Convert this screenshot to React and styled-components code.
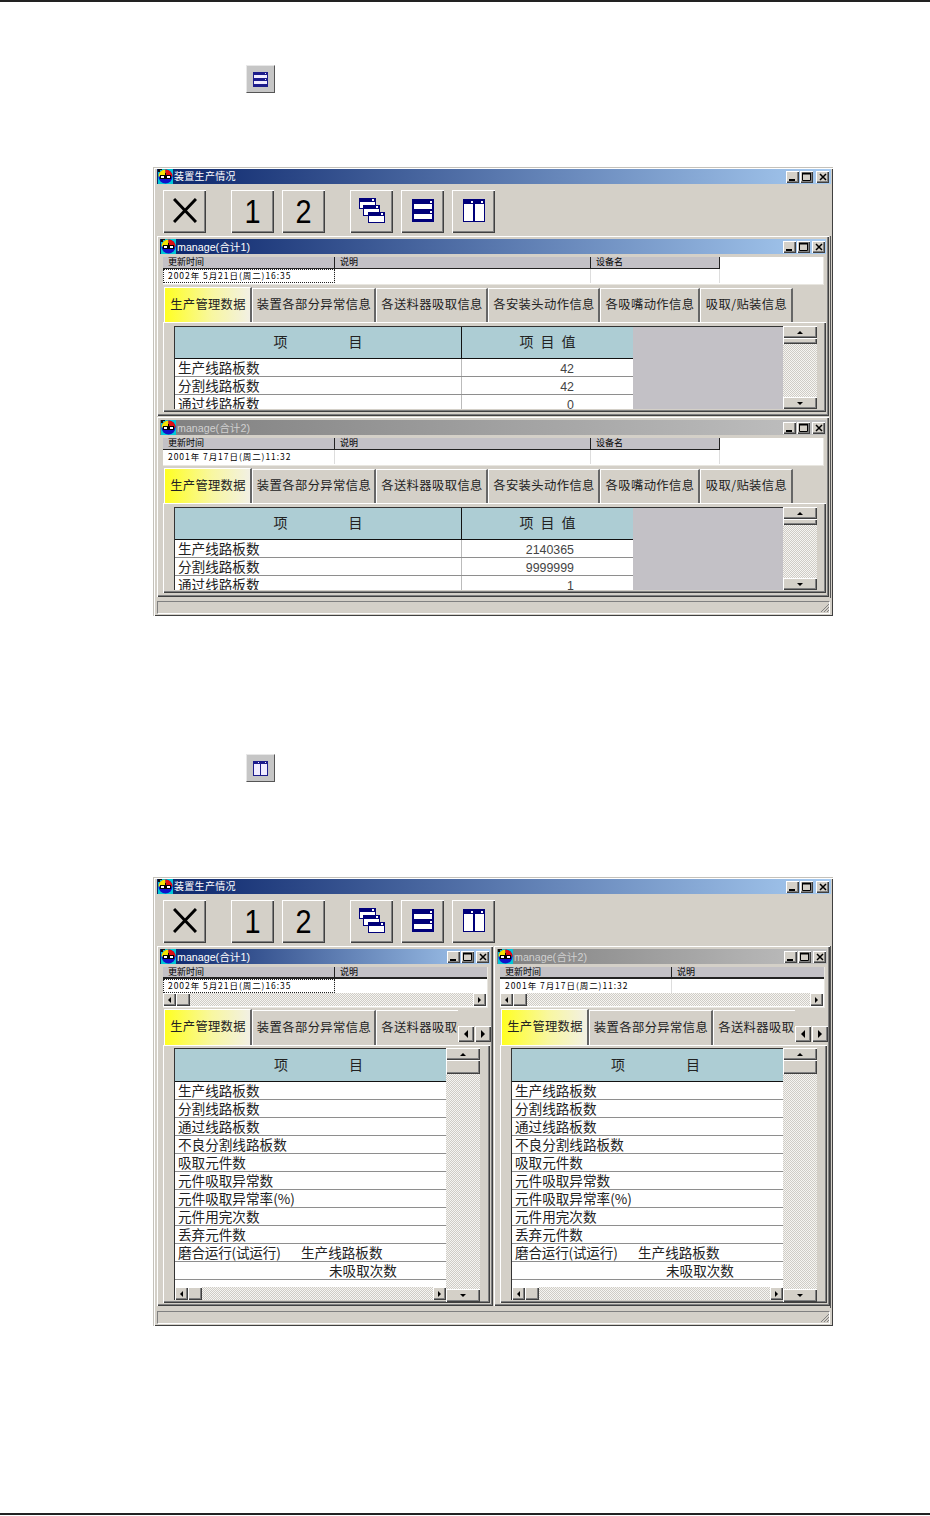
import React from "react";
import styled, { createGlobalStyle, css } from "styled-components";

const Global = createGlobalStyle`
  html, body { margin: 0; padding: 0; background: #fff; }
  body { font-family: "Noto Sans CJK SC", "Liberation Sans", sans-serif; color: #111; }
`;

const raised = css`
  background-color: #d4d0c8;
  box-shadow: inset 1px 1px #fff, inset -1px -1px #404040, inset -2px -2px #808080;
`;
const dither = css`
  background: repeating-conic-gradient(#cfccc6 0 25%, #f6f5f2 0 50%) 0 0 / 2px 2px;
`;

const Page = styled.div`
  width: 930px;
  height: 1516px;
  display: flex;
  flex-direction: column;
  overflow: hidden;
`;
const Rule = styled.div`
  height: 2px;
  background: #222;
  flex: none;
  margin-top: ${(p) => (p.$bottom ? "auto" : "0")};
  margin-bottom: ${(p) => (p.$bottom ? "1px" : "0")};
`;
const TipButton = styled.div`
  flex: none;
  width: 29px;
  height: 28px;
  margin: ${(p) => p.$top}px 0 0 246px;
  background: #c6c6c6;
  border: 1px solid;
  border-color: #e8e8e8 #555 #555 #e8e8e8;
  box-sizing: border-box;
  display: flex;
  align-items: center;
  justify-content: center;
`;
const Win = styled.div`
  flex: none;
  box-sizing: border-box;
  width: 680px;
  height: 449px;
  margin: ${(p) => p.$top}px 0 0 153px;
  padding: 2px 2px 3px 4px;
  background: #d4d0c8;
  box-shadow: inset 1px 1px #c4c1ba, inset 2px 2px #fff, inset -1px -1px #404040;
`;
const TitleBar = styled.div`
  height: 15px;
  display: flex;
  align-items: center;
  gap: 1px;
  padding-left: 1px;
  color: ${(p) => (p.$inactive ? "#d0d0d0" : "#fff")};
  background: ${(p) =>
    p.$inactive
      ? "linear-gradient(90deg, #808080, #c0c0c0)"
      : "linear-gradient(90deg, #0a246a, #a6caf0)"};
`;
const TitleText = styled.span`
  flex: 1;
  padding-top: 1px;
  font-family: "Liberation Sans", "Noto Sans CJK SC", sans-serif;
  font-size: ${(p) => (p.$child ? "10.7px" : "10px")};
  letter-spacing: ${(p) => (p.$child ? "0" : "0.3px")};
  line-height: 14px;
  white-space: nowrap;
`;
const WinControls = styled.div`
  display: flex;
  flex: none;
  padding-right: ${(p) => (p.$child ? "1px" : "2px")};
`;
const WinButton = styled.div`
  ${raised}
  width: 13px;
  height: 12px;
  margin-left: ${(p) => p.$gap}px;
  display: flex;
  align-items: center;
  justify-content: center;
`;
const Toolbar = styled.div`
  height: 52px;
  box-sizing: border-box;
  padding: 6px 0 3px 6px;
  display: flex;
  gap: 25px;
`;
const ToolGroup = styled.div`
  display: flex;
  gap: 8px;
`;
const ToolButton = styled.div`
  ${raised}
  box-sizing: border-box;
  width: 43px;
  height: 43px;
  padding-bottom: 2px;
  display: flex;
  align-items: center;
  justify-content: center;
`;
const Digit = styled.span`
  display: block;
  font-family: "Liberation Sans", sans-serif;
  font-size: 34px;
  line-height: 1;
  color: #000;
  transform: scaleX(0.85);
`;
const Mdi = styled.div`
  height: 362px;
  display: flex;
  flex-direction: ${(p) => (p.$side ? "row" : "column")};
  gap: 1px;
  border-right: 1px solid #555;
  box-sizing: border-box;
  width: 674px;
`;
const Child = styled.div`
  ${raised}
  box-sizing: border-box;
  flex: none;
  width: ${(p) => (p.$side ? "336px" : "672px")};
  height: ${(p) => (p.$side ? "360px" : "180px")};
  padding: 3px;
`;
const Info = styled.div`
  box-sizing: border-box;
  height: ${(p) => (p.$side ? "41px" : "28px")};
  margin: 3px 2px ${(p) => (p.$side ? "1px" : "2px")} 3px;
  background: #fff;
  border: 1px solid #e8e6e0;
  border-top: 0;
  border-left: 0;
  display: flex;
  flex-direction: column;
`;
const InfoRow = styled.div`
  display: flex;
  flex: none;
  height: ${(p) => p.$h}px;
`;
const InfoHead = styled.div`
  box-sizing: border-box;
  width: ${(p) => p.$w}px;
  flex: none;
  height: 12px;
  background: #c3c1c6;
  border-right: 1px solid #222;
  border-bottom: ${(p) => (p.$thick ? 2 : 1)}px solid #222;
  font-size: 9px;
  line-height: 10px;
  padding-left: 5px;
  color: #000;
  white-space: nowrap;
  &:last-child { ${(p) => p.$open && "border-right: 0; flex: 1;"} }
`;
const InfoCell = styled.div`
  box-sizing: border-box;
  width: ${(p) => p.$w}px;
  flex: none;
  height: 14px;
  padding-left: 5px;
  font-size: 8.5px;
  line-height: 13px;
  letter-spacing: 0.95px;
  color: #000;
  white-space: nowrap;
  border-right: 1px solid #ddd;
  outline: ${(p) => (p.$focus ? "1px dotted #222" : "none")};
  outline-offset: -1px;
  &:last-child { ${(p) => p.$open && "border-right: 0; flex: 1;"} }
`;
const HScroll = styled.div`
  ${dither}
  flex: none;
  height: 13px;
  width: ${(p) => p.$w}px;
  display: flex;
`;
const ScrollBtn = styled.div`
  ${raised}
  flex: none;
  width: ${(p) => p.$w || 13}px;
  height: ${(p) => p.$h || 13}px;
  margin-right: ${(p) => (p.$auto ? "auto" : "0")};
  display: flex;
  align-items: center;
  justify-content: center;
`;
const Arrow = styled.i`
  display: block;
  width: 0;
  height: 0;
  border-style: solid;
  border-color: transparent;
  ${(p) => {
    const s = p.$size || 3;
    if (p.$dir === "up") return `border-width: 0 ${s}px ${s}px; border-bottom-color: #000;`;
    if (p.$dir === "down") return `border-width: ${s}px ${s}px 0; border-top-color: #000;`;
    if (p.$dir === "left") return `border-width: ${s}px ${s}px ${s}px 0; border-right-color: #000;`;
    return `border-width: ${s}px 0 ${s}px ${s}px; border-left-color: #000;`;
  }}
`;
const TabRow = styled.div`
  display: flex;
  height: ${(p) => (p.$side ? "36px" : "35px")};
  margin-left: 4px;
`;
const TabStrip = styled.div`
  display: flex;
  width: ${(p) => (p.$clip ? "294px" : "auto")};
  overflow: hidden;
  flex: none;
`;
const Tab = styled.div`
  box-sizing: border-box;
  flex: none;
  width: ${(p) => p.$w}px;
  margin-top: ${(p) => (p.$active ? "0" : "1px")};
  border-top: 1px solid #fff;
  border-left: 1px solid #fff;
  border-right: 2px solid #666;
  background: ${(p) => (p.$active ? "linear-gradient(90deg, #ffff22 0%, #f8f7a0 55%, #f2f0e4 100%)" : "#d4d0c8")};
  display: flex;
  align-items: center;
  justify-content: center;
  padding: 0 0 3px 1px;
  overflow: hidden;
  font-size: 12.3px;
  letter-spacing: ${(p) => p.$ls || 0.4}px;
  color: #222;
  white-space: nowrap;
`;
const TabScroll = styled.div`
  display: flex;
  flex: none;
  gap: 1px;
  align-self: flex-end;
  margin-bottom: 3px;
`;
const Panel = styled.div`
  ${raised}
  box-sizing: border-box;
  margin-left: 3px;
  height: ${(p) => (p.$side ? "258px" : "90px")};
  width: ${(p) => (p.$side ? "327px" : "663px")};
  padding: ${(p) => (p.$side ? "3px" : "4px")} 0 0 11px;
  display: flex;
`;
const DataGrid = styled.div`
  flex: none;
  box-sizing: border-box;
  width: ${(p) => (p.$side ? "272px" : "609px")};
  height: ${(p) => (p.$side ? "252px" : "83px")};
  background: #fff;
  display: flex;
  flex-direction: column;
  border-left: 1px solid #333;
  border-top: 1px solid #333;
  overflow: hidden;
`;
const GridBody = styled.div`
  flex: 1;
  min-height: 0;
  display: flex;
  overflow: hidden;
`;
const Columns = styled.div`
  flex: none;
  width: ${(p) => (p.$side ? "271px" : "458px")};
  overflow: hidden;
`;
const Filler = styled.div`
  flex: 1;
  background: #c3c1c6;
`;
const HeaderRow = styled.div`
  display: flex;
  height: ${(p) => (p.$side ? "32px" : "31px")};
  width: 458px;
  background: #adcdd4;
  border-bottom: 1px solid #111;
`;
const HeadCell = styled.div`
  flex: none;
  box-sizing: border-box;
  width: ${(p) => p.$w}px;
  padding-bottom: 3px;
  display: flex;
  justify-content: center;
  align-items: center;
  gap: ${(p) => p.$gap}px;
  font-size: 14px;
  color: #222;
  border-right: ${(p) => (p.$line ? "1px solid #111" : "0")};
`;
const Row = styled.div`
  display: flex;
  width: 458px;
  height: 18px;
  box-sizing: border-box;
  border-bottom: 1px solid #8e8e8e;
`;
const Label = styled.div`
  flex: none;
  box-sizing: border-box;
  width: 287px;
  padding-left: ${(p) => p.$indent || 3}px;
  font-size: 13.6px;
  line-height: 17px;
  color: #222;
  white-space: nowrap;
  border-right: 1px solid #bbb;
`;
const Lead = styled.span`
  display: inline-block;
  width: 123px;
  letter-spacing: -0.2px;
`;
const Value = styled.div`
  flex: 1;
  text-align: right;
  padding-right: 59px;
  font-family: "Liberation Sans", sans-serif;
  font-size: 12.4px;
  line-height: 21px;
  color: #444;
`;
const VScroll = styled.div`
  ${dither}
  flex: none;
  width: 34px;
  height: ${(p) => (p.$side ? "254px" : "83px")};
  display: flex;
  flex-direction: column;
`;
const Spacer = styled.div`
  flex: 1;
`;
const StatusBar = styled.div`
  position: relative;
  box-sizing: border-box;
  height: 13px;
  width: 673px;
  margin-top: 3px;
  border: 1px solid;
  border-color: #808080 #fff #fff #808080;
`;
const Grip = styled.svg`
  position: absolute;
  right: -1px;
  bottom: 0;
`;

const Logo = () => (
  <svg width="15" height="15" viewBox="0 0 15 15" style={{ flex: "none" }}>
    <rect width="15" height="15" fill="#00c8d8" />
    <path d="M0 0h4v1H2v2H0z" fill="#111" />
    <circle cx="7.5" cy="7.5" r="7" fill="#1010c8" />
    <path d="M7.5 7.5V.5a7 7 0 0 0-7 7z" fill="#f4e400" />
    <path d="M7.5 7.5V.5a7 7 0 0 1 7 7z" fill="#e01010" />
    <rect x="2" y="6" width="11" height="4" fill="#000" />
    <rect x="3" y="7" width="3" height="2" fill="#fff" />
    <rect x="9" y="7" width="3" height="2" fill="#fff" />
    <rect x="7" y="4" width="1" height="2" fill="#000" />
  </svg>
);
const CloseGlyph = () => (
  <svg width="8" height="8" viewBox="0 0 8 8"><path d="M1 1l6 6M7 1L1 7" stroke="#000" strokeWidth="1.5" /></svg>
);
const MaxGlyph = () => (
  <svg width="9" height="9" viewBox="0 0 9 9"><path d="M.5 1.5h8v7h-8z" fill="none" stroke="#000" /><path d="M0 1.5h9" stroke="#000" strokeWidth="2" /></svg>
);
const MinGlyph = () => (
  <svg width="9" height="9" viewBox="0 0 9 9"><rect x="1" y="7" width="6" height="2" fill="#000" /></svg>
);
const BigX = () => (
  <svg width="24" height="25" viewBox="0 0 24 25"><path d="M1 1l22 23M23 1L1 24" stroke="#000" strokeWidth="3" /></svg>
);
const Cascade = () => (
  <svg width="26" height="25" viewBox="0 0 26 25" shapeRendering="crispEdges">
    {[[0, 0], [4, 7], [9, 14]].map(([x, y]) => (
      <g key={x}>
        <rect x={x} y={y} width="17" height="11" fill="#00007a" />
        <rect x={x + 1} y={y + 4} width="15" height="6" fill="#fff" />
        <rect x={x + 13} y={y + 1} width="2" height="2" fill="#fff" />
      </g>
    ))}
  </svg>
);
const HTile = () => (
  <svg width="22" height="23" viewBox="0 0 22 23" shapeRendering="crispEdges">
    <rect width="22" height="23" fill="#00007a" />
    <rect x="2" y="5" width="18" height="5" fill="#fff" />
    <rect x="2" y="15" width="18" height="5" fill="#fff" />
    <rect x="18" y="2" width="2" height="2" fill="#fff" />
    <rect x="18" y="12" width="2" height="2" fill="#fff" />
  </svg>
);
const VTile = () => (
  <svg width="22" height="23" viewBox="0 0 22 23" shapeRendering="crispEdges">
    <rect width="22" height="23" fill="#00007a" />
    <rect x="1" y="5" width="9" height="17" fill="#fff" />
    <rect x="12" y="5" width="9" height="17" fill="#fff" />
    <rect x="8" y="2" width="2" height="2" fill="#fff" />
    <rect x="18" y="2" width="2" height="2" fill="#fff" />
  </svg>
);
const SmallH = () => (
  <svg width="15" height="15" viewBox="0 0 15 15" shapeRendering="crispEdges">
    <rect width="15" height="15" fill="#1c1c8c" />
    <rect x="1" y="3" width="13" height="3" fill="#f0ecff" />
    <rect x="1" y="9" width="13" height="3" fill="#f0ecff" />
    <rect x="12" y="1" width="1" height="1" fill="#f0ecff" />
    <rect x="12" y="7" width="1" height="1" fill="#f0ecff" />
  </svg>
);
const SmallV = () => (
  <svg width="15" height="15" viewBox="0 0 15 15" shapeRendering="crispEdges">
    <rect width="15" height="15" fill="#1c1c8c" />
    <rect x="1" y="3" width="6" height="11" fill="#f0ecff" />
    <rect x="8" y="3" width="6" height="11" fill="#f0ecff" />
    <rect x="5" y="1" width="1" height="1" fill="#f0ecff" />
    <rect x="12" y="1" width="1" height="1" fill="#f0ecff" />
  </svg>
);

const TABS = [
  ["生产管理数据", 88],
  ["装置各部分异常信息", 124],
  ["各送料器吸取信息", 112],
  ["各安装头动作信息", 112],
  ["各吸嘴动作信息", 100],
  ["吸取/贴装信息", 93],
];
const ROWS = ["分割线路板数", "通过线路板数", "不良分割线路板数", "吸取元件数", "元件吸取异常数", "元件吸取异常率(%)", "元件用完次数", "丢弃元件数"];

const Controls = ({ child }) => (
  <WinControls $child={child}>
    <WinButton $gap={0}><MinGlyph /></WinButton>
    <WinButton $gap={1}><MaxGlyph /></WinButton>
    <WinButton $gap={child ? 2 : 3}><CloseGlyph /></WinButton>
  </WinControls>
);

const VBar = ({ side }) => (
  <VScroll $side={side}>
    <ScrollBtn $w={34} $h={12}><Arrow $dir="up" /></ScrollBtn>
    <ScrollBtn $w={34} $h={side ? 14 : 6} />
    <Spacer />
    <ScrollBtn $w={34} $h={side ? 13 : 12}><Arrow $dir="down" /></ScrollBtn>
  </VScroll>
);

const ManageWindow = ({ title, date, active, side, values }) => (
  <Child $side={side}>
    <TitleBar $child $inactive={!active}>
      <Logo />
      <TitleText $child>{title}</TitleText>
      <Controls child />
    </TitleBar>
    <Info $side={side}>
      <InfoRow $h={12}>
        <InfoHead $w={172} $thick={side}>更新时间</InfoHead>
        {side ? (
          <InfoHead $open $thick $w={100}>说明</InfoHead>
        ) : (
          <>
            <InfoHead $w={256}>说明</InfoHead>
            <InfoHead $w={129}>设备名</InfoHead>
          </>
        )}
      </InfoRow>
      <InfoRow $h={14}>
        <InfoCell $w={172} $focus={active}>{date}</InfoCell>
        {side ? (
          <InfoCell $open $w={100} />
        ) : (
          <>
            <InfoCell $w={256} />
            <InfoCell $w={129} />
          </>
        )}
      </InfoRow>
      {side && (
        <HScroll $w={323}>
          <ScrollBtn><Arrow $dir="left" /></ScrollBtn>
          <ScrollBtn $auto $w={14} />
          <ScrollBtn><Arrow $dir="right" /></ScrollBtn>
        </HScroll>
      )}
    </Info>
    <TabRow $side={side}>
      <TabStrip $clip={side}>
        {(side ? TABS.slice(0, 3) : TABS).map(([t, w], i) => (
          <Tab key={t} $w={w} $active={i === 0} $ls={i === 0 ? 0.3 : 0.4}>{t}</Tab>
        ))}
      </TabStrip>
      {side && (
        <TabScroll>
          <ScrollBtn $w={16} $h={16}><Arrow $dir="left" $size={4} /></ScrollBtn>
          <ScrollBtn $w={16} $h={16}><Arrow $dir="right" $size={4} /></ScrollBtn>
        </TabScroll>
      )}
    </TabRow>
    <Panel $side={side}>
      <DataGrid $side={side}>
        <GridBody>
          <Columns $side={side}>
            <HeaderRow $side={side}>
              <HeadCell $w={287} $gap={61} $line={!side}><span>项</span><span>目</span></HeadCell>
              {!side && <HeadCell $w={171} $gap={7}><span>项</span><span>目</span><span>值</span></HeadCell>}
            </HeaderRow>
            <Row>
              <Label>生产线路板数</Label>
              {values && <Value>{values[0]}</Value>}
            </Row>
            {(side ? ROWS : ROWS.slice(0, 2)).map((r, i) => (
              <Row key={r}>
                <Label>{r}</Label>
                {values && <Value>{values[i + 1]}</Value>}
              </Row>
            ))}
            {side && (
              <>
                <Row><Label><Lead>磨合运行(试运行)</Lead>生产线路板数</Label></Row>
                <Row><Label $indent={154}>未吸取次数</Label></Row>
              </>
            )}
          </Columns>
          {!side && <Filler />}
        </GridBody>
        {side && (
          <HScroll $w={271}>
            <ScrollBtn><Arrow $dir="left" /></ScrollBtn>
            <ScrollBtn $auto $w={14} />
            <ScrollBtn><Arrow $dir="right" /></ScrollBtn>
          </HScroll>
        )}
      </DataGrid>
      <VBar side={side} />
    </Panel>
  </Child>
);

const MainWindow = ({ top, side }) => (
  <Win $top={top}>
    <TitleBar>
      <Logo />
      <TitleText>装置生产情况</TitleText>
      <Controls />
    </TitleBar>
    <Toolbar>
      <ToolGroup><ToolButton><BigX /></ToolButton></ToolGroup>
      <ToolGroup>
        <ToolButton><Digit>1</Digit></ToolButton>
        <ToolButton><Digit>2</Digit></ToolButton>
      </ToolGroup>
      <ToolGroup>
        <ToolButton><Cascade /></ToolButton>
        <ToolButton><HTile /></ToolButton>
        <ToolButton><VTile /></ToolButton>
      </ToolGroup>
    </Toolbar>
    <Mdi $side={side}>
      <ManageWindow side={side} active title="manage(合计1)" date="2002年 5月21日(周二)16:35" values={side ? null : ["42", "42", "0"]} />
      <ManageWindow side={side} title="manage(合计2)" date="2001年 7月17日(周二)11:32" values={side ? null : ["2140365", "9999999", "1"]} />
    </Mdi>
    <StatusBar>
      <Grip width="12" height="12" viewBox="0 0 12 12">
        <path d="M11 3L3 11M11 6L6 11M11 9L9 11" stroke="#808080" fill="none" />
      </Grip>
    </StatusBar>
  </Win>
);

export default function App() {
  return (
    <Page>
      <Global />
      <Rule />
      <TipButton $top={63}><SmallH /></TipButton>
      <MainWindow top={74} />
      <TipButton $top={138}><SmallV /></TipButton>
      <MainWindow top={95} side />
      <Rule $bottom />
    </Page>
  );
}
